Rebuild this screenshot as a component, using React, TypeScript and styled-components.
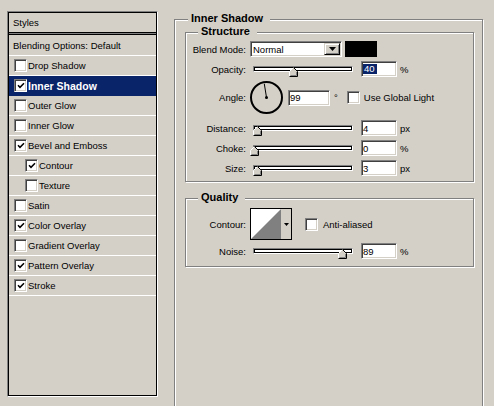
import styled, { createGlobalStyle } from "styled-components";

const FACE = "#d4d0c8";
const NAVY = "#0a246a";

type StyleItem = {
  label: string;
  checked?: boolean;
  indent?: boolean;
  selected?: boolean;
};

const styleItems: StyleItem[] = [
  { label: "Drop Shadow" },
  { label: "Inner Shadow", checked: true, selected: true },
  { label: "Outer Glow" },
  { label: "Inner Glow" },
  { label: "Bevel and Emboss", checked: true },
  { label: "Contour", checked: true, indent: true },
  { label: "Texture", indent: true },
  { label: "Satin" },
  { label: "Color Overlay", checked: true },
  { label: "Gradient Overlay" },
  { label: "Pattern Overlay", checked: true },
  { label: "Stroke", checked: true },
];

const GlobalStyle = createGlobalStyle`
  html, body {
    margin: 0;
    padding: 0;
    overflow: hidden;
  }
  body {
    width: 494px;
    height: 406px;
    background: ${FACE};
    color: #000;
    font-family: "Liberation Sans", Arial, sans-serif;
    font-size: 9.5px;
  }
`;

const Page = styled.div`
  display: flex;
  align-items: flex-start;
  height: 406px;
  box-sizing: border-box;
  overflow: hidden;
  padding: 11px 0 0 7px;
`;

/* ---------- left list ---------- */

const StylesPanel = styled.div`
  display: flex;
  width: 151px;
  height: 386px;
  box-sizing: border-box;
  border: 1px solid;
  border-color: #808080 #fff #fff #808080;
`;

const StylesInner = styled.div`
  flex: 1;
  display: flex;
  flex-direction: column;
  border: 1px solid #000;
`;

const PanelHeader = styled.div`
  height: 19px;
  display: flex;
  align-items: center;
  padding-left: 4px;
  border-bottom: 1px solid #000;
`;

const HeaderRule = styled.div`
  height: 1px;
  background: #808080;
  border-bottom: 1px solid #000;
`;

const StyleRow = styled.div<{ $h?: number; $indent?: number; $selected?: boolean }>`
  height: ${({ $h }) => $h ?? 20}px;
  box-sizing: border-box;
  display: flex;
  align-items: center;
  gap: 1px;
  padding-left: ${({ $indent }) => $indent ?? 5}px;
  border-bottom: 1px solid ${({ $selected }) => ($selected ? NAVY : "#fff")};
  background: ${({ $selected }) => ($selected ? NAVY : "transparent")};
  color: ${({ $selected }) => ($selected ? "#fff" : "#000")};
  font-weight: ${({ $selected }) => ($selected ? "bold" : "normal")};
  font-size: ${({ $selected }) => ($selected ? "10.5px" : "9.5px")};
`;

const CheckBox = styled.span`
  flex-shrink: 0;
  width: 13px;
  height: 13px;
  box-sizing: border-box;
  display: flex;
  align-items: center;
  justify-content: center;
  border: 1px solid;
  border-color: #808080 #fff #fff #808080;
  box-shadow: inset 1px 1px #404040, inset -1px -1px ${FACE};
  background: #fff;
`;

const Check = ({ on }: { on?: boolean }) => (
  <CheckBox>
    {on && (
      <svg width="8" height="7" viewBox="0 0 8 7">
        <path d="M1 3.2 L3 5.3 L7 1.2" fill="none" stroke="#000" strokeWidth="1.5" />
      </svg>
    )}
  </CheckBox>
);

/* ---------- right side ---------- */

const RightArea = styled.div`
  margin: 8px 0 0 16px;
`;

const Group = styled.div<{ $w: number; $pad: string; $mt?: number }>`
  width: ${({ $w }) => $w}px;
  box-sizing: border-box;
  display: flex;
  flex-direction: column;
  margin-top: ${({ $mt }) => $mt ?? 0}px;
  padding: ${({ $pad }) => $pad};
  border: 1px solid #808080;
  box-shadow: inset 1px 1px #fff, 1px 1px #fff;
`;

const GroupTitle = styled.div<{ $ml: number }>`
  align-self: flex-start;
  height: 13px;
  line-height: 13px;
  margin: -8px 0 0 ${({ $ml }) => $ml}px;
  padding: 0 7px 0 3px;
  background: ${FACE};
  font-size: 11px;
  font-weight: bold;
`;

const Row = styled.div<{ $h?: number; $mt: number }>`
  display: flex;
  align-items: center;
  height: ${({ $h }) => $h ?? 16}px;
  margin-top: ${({ $mt }) => $mt}px;
`;

const Label = styled.span`
  flex-shrink: 0;
  width: 60px;
  margin-right: 4px;
  text-align: right;
  white-space: nowrap;
`;

const Sunken = styled.div<{ $w: number }>`
  width: ${({ $w }) => $w}px;
  height: 16px;
  box-sizing: border-box;
  display: flex;
  align-items: center;
  border: 1px solid;
  border-color: #808080 #fff #fff #808080;
  box-shadow: inset 1px 1px #404040, inset -1px -1px ${FACE};
  background: #fff;
`;

const NumField = styled(Sunken)<{ $ml?: number }>`
  margin-left: ${({ $ml }) => $ml ?? 8}px;
  padding-left: 1px;
`;

const SelectedText = styled.span`
  background: ${NAVY};
  color: #fff;
  line-height: 10px;
  padding: 0 2px 0 1px;
`;

const Unit = styled.span<{ $ml?: number }>`
  margin-left: ${({ $ml }) => $ml ?? 3}px;
`;

const SelectBox = styled(Sunken)`
  padding: 1px;
`;

const SelectValue = styled.span`
  margin-left: 1px;
`;

const DropButton = styled.span`
  margin-left: auto;
  width: 16px;
  height: 12px;
  box-sizing: border-box;
  display: flex;
  align-items: center;
  justify-content: center;
  border: 1px solid;
  border-color: ${FACE} #000 #000 ${FACE};
  box-shadow: inset 1px 1px #fff, inset -1px -1px #808080;
  background: ${FACE};
`;

const Swatch = styled.div`
  width: 32px;
  height: 16px;
  margin-left: 3px;
  background: #000;
`;

const Track = styled.div`
  position: relative;
  width: 100px;
  height: 6px;
  margin-left: 3px;
  box-sizing: border-box;
  border: 1px solid;
  border-color: #808080 #fff #fff #808080;
  box-shadow: inset 1px 1px #000, inset -1px -1px #000;
  background: #fff;
`;

const ThumbWrap = styled.span<{ $pos: number }>`
  position: absolute;
  top: 0;
  left: ${({ $pos }) => $pos - 5.5}px;
  width: 9px;
  height: 10px;
  display: block;
`;

const Slider = ({ pos }: { pos: number }) => (
  <Track>
    <ThumbWrap $pos={pos}>
      <svg width="9" height="10" viewBox="0 0 9 10">
        <polygon points="0.5,4.5 4.5,0.5 8.5,4.5 8.5,9.5 0.5,9.5" fill={FACE} />
        <polyline points="0.5,9.5 0.5,4.5 4.5,0.5" fill="none" stroke="#fff" />
        <polyline points="4.5,0.5 8.5,4.5 8.5,9.5 0.5,9.5" fill="none" stroke="#000" />
        <polyline points="7.5,5 7.5,8.5 1.5,8.5" fill="none" stroke="#808080" />
      </svg>
    </ThumbWrap>
  </Track>
);

const Dial = styled.svg`
  flex-shrink: 0;
`;

const Degree = styled.span`
  margin-left: 4px;
`;

const CheckLabel = styled.span<{ $ml: number }>`
  margin-left: ${({ $ml }) => $ml}px;
`;

const Spacer = styled.span<{ $w: number }>`
  width: ${({ $w }) => $w}px;
  flex-shrink: 0;
`;

const ContourPicker = styled.div`
  display: flex;
  width: 42px;
  height: 32px;
  box-sizing: border-box;
  border: 1px solid #000;
  background: ${FACE};
`;

const ContourArrow = styled.span`
  flex: 1;
  display: flex;
  align-items: center;
  justify-content: center;
`;

const DownArrow = ({ w, h }: { w: number; h: number }) => (
  <svg width={w} height={h} viewBox={`0 0 ${w} ${h}`}>
    <polygon points={`0,0 ${w},0 ${w / 2},${h}`} fill="#000" />
  </svg>
);

type SliderRow = { label: string; value: string; unit: string; pos: number; mt: number };

const structureSliders: SliderRow[] = [
  { label: "Distance:", value: "4", unit: "px", pos: 4.5, mt: 6 },
  { label: "Choke:", value: "0", unit: "%", pos: 1, mt: 4 },
  { label: "Size:", value: "3", unit: "px", pos: 4.5, mt: 4 },
];

export default function App() {
  return (
    <>
      <GlobalStyle />
      <Page>
        <StylesPanel>
          <StylesInner>
            <PanelHeader>Styles</PanelHeader>
            <HeaderRule />
            <StyleRow $h={21} $indent={4}>
              Blending Options: Default
            </StyleRow>
            {styleItems.map((item) => (
              <StyleRow
                key={item.label}
                $indent={item.indent ? 16 : 5}
                $selected={item.selected}
              >
                <Check on={item.checked} />
                {item.label}
              </StyleRow>
            ))}
          </StylesInner>
        </StylesPanel>

        <RightArea>
          <Group $w={309} $pad="0 8px 200px 10px">
            <GroupTitle $ml={3}>Inner Shadow</GroupTitle>

            <Group $w={289} $pad="0 0 5px 0" $mt={7}>
              <GroupTitle $ml={12}>Structure</GroupTitle>
              <Row $mt={3}>
                <Label>Blend Mode:</Label>
                <SelectBox $w={92}>
                  <SelectValue>Normal</SelectValue>
                  <DropButton>
                    <DownArrow w={7} h={4} />
                  </DropButton>
                </SelectBox>
                <Swatch />
              </Row>
              <Row $mt={4}>
                <Label>Opacity:</Label>
                <Slider pos={40.5} />
                <NumField $w={36}>
                  <SelectedText>40</SelectedText>
                </NumField>
                <Unit>%</Unit>
              </Row>
              <Row $mt={4} $h={33}>
                <Label>Angle:</Label>
                <Dial width="33" height="33" viewBox="0 0 33 33">
                  <circle cx="16.5" cy="16.5" r="15.5" fill="none" stroke="#000" strokeWidth="2" />
                  <line x1="16.5" y1="16.5" x2="14.3" y2="2.8" stroke="#000" strokeWidth="1" />
                  <circle cx="16.5" cy="16.5" r="1.5" fill="#000" />
                </Dial>
                <NumField $w={42} $ml={5}>
                  99
                </NumField>
                <Degree>°</Degree>
                <Spacer $w={9} />
                <Check />
                <CheckLabel $ml={4}>Use Global Light</CheckLabel>
              </Row>
              {structureSliders.map((s) => (
                <Row key={s.label} $mt={s.mt}>
                  <Label>{s.label}</Label>
                  <Slider pos={s.pos} />
                  <NumField $w={36}>{s.value}</NumField>
                  <Unit>{s.unit}</Unit>
                </Row>
              ))}
            </Group>

            <Group $w={289} $pad="0 0 7px 0" $mt={16}>
              <GroupTitle $ml={12}>Quality</GroupTitle>
              <Row $mt={4} $h={32}>
                <Label>Contour:</Label>
                <ContourPicker>
                  <svg width="30" height="30" viewBox="0 0 30 30">
                    <rect width="30" height="30" fill="#fff" />
                    <polygon points="0,30 30,0 30,30" fill="#808080" />
                  </svg>
                  <ContourArrow>
                    <DownArrow w={5} h={3} />
                  </ContourArrow>
                </ContourPicker>
                <Spacer $w={13} />
                <Check />
                <CheckLabel $ml={5}>Anti-aliased</CheckLabel>
              </Row>
              <Row $mt={3}>
                <Label>Noise:</Label>
                <Slider pos={89.8} />
                <NumField $w={36}>89</NumField>
                <Unit>%</Unit>
              </Row>
            </Group>
          </Group>
        </RightArea>
      </Page>
    </>
  );
}
